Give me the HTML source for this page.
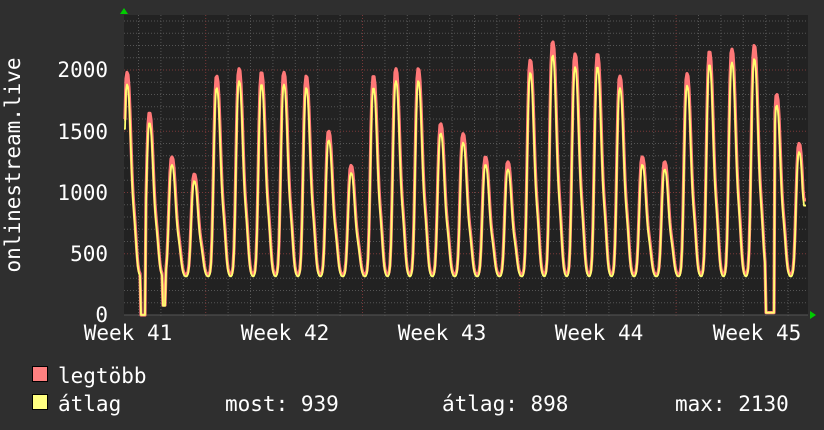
<!DOCTYPE html>
<html><head><meta charset="utf-8"><style>
body{margin:0;background:#2f2f2f;width:824px;height:430px;overflow:hidden}
svg{display:block}
text{font-family:"DejaVu Sans Mono","Liberation Mono",monospace;font-size:21px;fill:#fff}
</style></head><body>
<svg id="s" width="824" height="430" xmlns="http://www.w3.org/2000/svg">
<rect x="0" y="0" width="824" height="430" fill="#2f2f2f"/>
<rect x="124" y="15" width="684" height="300" fill="#222"/>
<g id="grid"></g>
<path id="red" fill="none" stroke="#ff7878" stroke-width="3.2" stroke-linejoin="round"/>
<path id="yel" fill="none" stroke="#ffff70" stroke-width="1.8" stroke-linejoin="round"/>
<polygon points="120,14 124,8 128,14" fill="#0c0"/>
<polygon points="810,311 816,315 810,319" fill="#0c0"/>
<g text-anchor="end">
<text x="108" y="77">2000</text>
<text x="108" y="139">1500</text>
<text x="108" y="200">1000</text>
<text x="108" y="261">500</text>
<text x="108" y="322">0</text>
</g>
<g text-anchor="middle">
<text x="128" y="340">Week 41</text>
<text x="285" y="340">Week 42</text>
<text x="442" y="340">Week 43</text>
<text x="599" y="340">Week 44</text>
<text x="757" y="340">Week 45</text>
</g>
<text transform="translate(20,165) rotate(-90)" text-anchor="middle">onlinestream.live</text>
<rect x="32.5" y="366.5" width="15" height="15" fill="#ff8080" stroke="#000"/>
<rect x="32.5" y="394.5" width="15" height="15" fill="#ffff80" stroke="#000"/>
<text x="58" y="383">legtöbb</text>
<text x="58" y="411">átlag</text>
<text x="225" y="411">most: 939</text>
<text x="442" y="411">átlag: 898</text>
<text x="675" y="411">max: 2130</text>
</svg>
<script>
var g=document.getElementById('grid'),h='';
for(var v=100;v<=2400;v+=100){var y=315-v*0.1225;var maj=v%500==0;
h+='<line x1="124" x2="808" y1="'+y+'" y2="'+y+'" stroke="'+(maj?'#7a3838':'#555')+'" stroke-dasharray="1,2"/>';}
for(var x=138.5;x<808;x+=22.4){var maj=Math.abs(((x-206)/156.8)-Math.round((x-206)/156.8))<0.02;
h+='<line y1="15" y2="318" x1="'+x+'" x2="'+x+'" stroke="'+(maj?'#7a3838':'#555')+'" stroke-dasharray="1,2"/>';}
h+='<line x1="124" x2="808" y1="315" y2="315" stroke="#555"/>';
g.innerHTML=h;
var peaks=[1980,1650,1290,1150,1950,2010,1980,1980,1950,1500,1220,1950,2010,2010,1560,1480,1290,1250,2080,2230,2130,2130,1950,1290,1250,1970,2150,2170,2200,1800,1400];
var c0=127;
function val(x){var i=Math.round((x-c0)/22.4);var tr=330;var best=tr;
for(var k=i-1;k<=i+1;k++){if(k<0||k>=peaks.length)continue;var d=x-(c0+k*22.4);
var w=d<0?3.8:5.2;var p=peaks[k];var f=Math.exp(-Math.pow(Math.abs(d)/w,2.6));
var sh=Math.exp(-Math.pow((d-7.5)/2.8,2))*0.22*(p-tr);
best=Math.max(best,tr+(p-tr)*f+sh);}
if(x>140&&x<146)best=0; if(x>162&&x<166)best=80; if(x>765&&x<775)best=20;
if(x<126)best=1600;
if(x>803)best=Math.max(best,940);
return best;}
var r='',yy='';
for(var x=124;x<=806;x+=1){var v=val(x);var ny=315-v*0.1225;var ay=315-v*0.95*0.1225;
r+=(x==124?'M':'L')+x+','+ny.toFixed(1);yy+=(x==124?'M':'L')+x+','+ay.toFixed(1);}
document.getElementById('red').setAttribute('d',r);
document.getElementById('yel').setAttribute('d',yy);
</script>
</body></html>
